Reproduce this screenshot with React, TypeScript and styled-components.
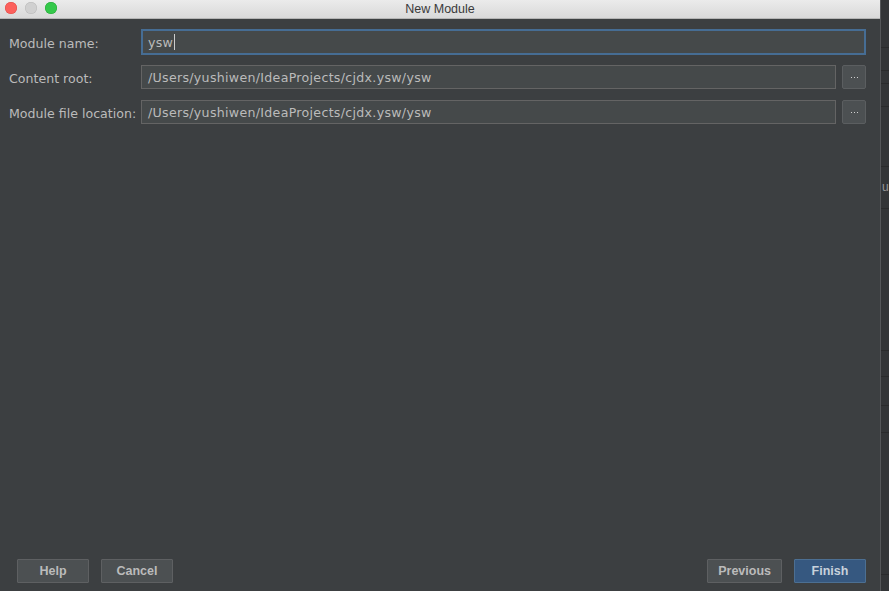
import React from 'react';
import { styled, createGlobalStyle } from 'styled-components';

const GlobalStyle = createGlobalStyle`
  html, body {
    margin: 0;
    padding: 0;
    background: #313335;
  }
  #root {
    height: 591px;
  }
`;

const ROWS = [
  { id: 'name', label: 'Module name:', value: 'ysw', focused: true, browse: false },
  {
    id: 'root',
    label: 'Content root:',
    value: '/Users/yushiwen/IdeaProjects/cjdx.ysw/ysw',
    focused: false,
    browse: true,
  },
  {
    id: 'file',
    label: 'Module file location:',
    value: '/Users/yushiwen/IdeaProjects/cjdx.ysw/ysw',
    focused: false,
    browse: true,
  },
];

// lines of the IDE window that shows behind the dialog
const STRIP_LINES = [47, 70, 83, 106, 166, 208, 350, 376, 405, 432, 574];

const App = () => {
  return (
    <>
      <GlobalStyle />
      <Screen>
        <Dialog>
          <TitleBar>
            <Lights>
              <Light color="#fc605c" edge="#de4a45" />
              <Light color="#d0d0d0" edge="#b8b8b8" />
              <Light color="#34c84a" edge="#23a634" />
            </Lights>
            <Title>New Module</Title>
          </TitleBar>
          <Body>
            {ROWS.map((row) => (
              <FormRow key={row.id}>
                <Label>{row.label}</Label>
                <Field focused={row.focused} wide={!row.browse}>
                  {row.value}
                  {row.focused && <Caret />}
                </Field>
                {row.browse && (
                  <BrowseBtn>
                    <Dot />
                    <Dot />
                    <Dot />
                  </BrowseBtn>
                )}
              </FormRow>
            ))}
          </Body>
          <Footer>
            <ButtonGroup>
              <Button>Help</Button>
              <Button>Cancel</Button>
            </ButtonGroup>
            <ButtonGroup>
              <Button>Previous</Button>
              <Button primary>Finish</Button>
            </ButtonGroup>
          </Footer>
        </Dialog>
        <Strip>
          {STRIP_LINES.map((y) => (
            <StripLine key={y} style={{ top: y }} />
          ))}
          <StripLetter>u</StripLetter>
        </Strip>
      </Screen>
    </>
  );
};

const Screen = styled.div`
  display: flex;
  width: 889px;
  height: 591px;
  overflow: hidden;
`;

const Dialog = styled.div`
  display: flex;
  flex-direction: column;
  width: 881px;
  height: 591px;
  background: #3c3f41;
  border-right: 1px solid #555759;
  box-sizing: border-box;
`;

const TitleBar = styled.div`
  position: relative;
  display: flex;
  align-items: center;
  justify-content: center;
  height: 18px;
  flex-shrink: 0;
  background: linear-gradient(#ebebeb, #d9d9d9);
  border-bottom: 1px solid #b5b5b5;
`;

const Lights = styled.div`
  position: absolute;
  left: 5px;
  top: 2px;
  display: flex;
  gap: 8px;
`;

const Light = styled.span<{ color: string; edge: string }>`
  width: 12px;
  height: 12px;
  border-radius: 50%;
  background: ${(p) => p.color};
  box-shadow: inset 0 0 0 0.5px ${(p) => p.edge};
`;

const Title = styled.div`
  font-family: 'Liberation Sans', Arial, sans-serif;
  font-size: 12.5px;
  color: #3a3a3a;
`;

const Body = styled.div`
  flex: 1;
  display: flex;
  flex-direction: column;
  gap: 11px;
  padding: 11px 14px 0 9px;
`;

const FormRow = styled.div`
  display: flex;
  align-items: center;
  height: 24px;
`;

const Label = styled.div`
  width: 132px;
  flex-shrink: 0;
  padding-top: 3px;
  font-family: 'DejaVu Sans', 'Noto Sans', sans-serif;
  font-size: 12.6px;
  color: #bbbbbb;
  white-space: nowrap;
`;

const Field = styled.div<{ focused: boolean; wide: boolean }>`
  display: flex;
  align-items: center;
  flex: 1;
  height: 24px;
  box-sizing: border-box;
  margin-right: ${(p) => (p.wide ? 0 : 6)}px;
  padding-left: ${(p) => (p.focused ? 5 : 6)}px;
  background: #45494a;
  border: ${(p) => (p.focused ? '2px solid #466d94' : '1px solid #646464')};
  ${(p) => (p.focused ? 'height: 26px; margin-top: -1px; margin-bottom: -1px;' : '')}
  font-family: 'DejaVu Sans', 'Noto Sans', sans-serif;
  font-size: 12.6px;
  letter-spacing: 0.3px;
  color: #bbbbbb;
  white-space: nowrap;
`;

const Caret = styled.span`
  width: 1px;
  height: 16px;
  margin-left: 1px;
  background: #cccccc;
`;

const BrowseBtn = styled.div`
  display: flex;
  align-items: center;
  justify-content: center;
  gap: 2px;
  width: 24px;
  height: 24px;
  box-sizing: border-box;
  background: #4c5052;
  border: 1px solid #5b5e60;
  border-radius: 2px;
`;

const Dot = styled.span`
  width: 1px;
  height: 1px;
  background: #d0d0d0;
`;

const Footer = styled.div`
  display: flex;
  justify-content: space-between;
  padding: 0 14px 8px 17px;
`;

const ButtonGroup = styled.div`
  display: flex;
  gap: 12px;
`;

const Button = styled.button<{ primary?: boolean }>`
  min-width: 72px;
  height: 24px;
  padding: 0 10px;
  box-sizing: border-box;
  background: ${(p) => (p.primary ? '#365880' : '#4c5052')};
  border: 1px solid ${(p) => (p.primary ? '#4c6f92' : '#5e6062')};
  border-radius: 1px;
  font-family: 'Liberation Sans', Arial, sans-serif;
  font-weight: bold;
  font-size: 12.5px;
  color: ${(p) => (p.primary ? '#c8d2dc' : '#bbbbbb')};
`;

const Strip = styled.div`
  position: relative;
  flex: 1;
  background: #333537;
`;

const StripLine = styled.div`
  position: absolute;
  left: 0;
  right: 0;
  height: 1px;
  background: #2a2b2c;
`;

const StripLetter = styled.div`
  position: absolute;
  left: 1px;
  top: 180px;
  font-family: 'Liberation Sans', Arial, sans-serif;
  font-size: 12px;
  color: #999999;
`;

export default App;
